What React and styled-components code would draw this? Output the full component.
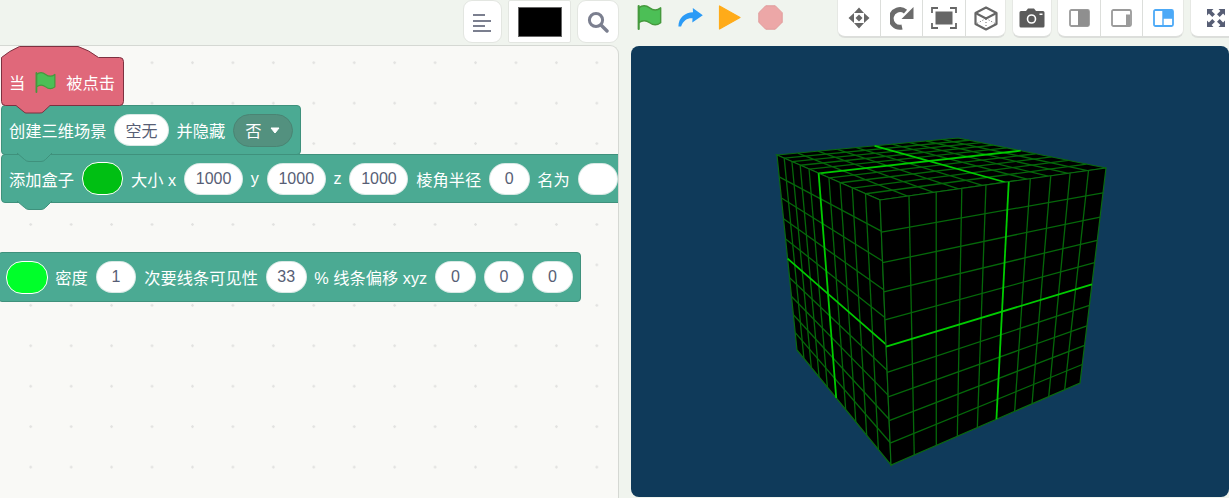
import React from 'react';
import styled, { createGlobalStyle } from 'styled-components';

const GlobalStyle = createGlobalStyle`
    html, body {
        margin: 0;
        padding: 0;
        background: #f0f4ee;
    }
    * {
        box-sizing: border-box;
    }
`;

const Page = styled.div`
    display: grid;
    grid-template-columns: 619px 1fr;
    grid-template-rows: 45px 1fr;
    column-gap: 12px;
    width: 1229px;
    height: 498px;
    overflow: hidden;
    background: #f0f4ee;
    font-family: "Liberation Sans", "Noto Sans CJK SC", sans-serif;
`;

const EditorBar = styled.div`
    display: flex;
    justify-content: flex-end;
    align-items: flex-start;
    gap: 6px;
`;

const StageBar = styled.div`
    display: flex;
    align-items: flex-start;
    justify-content: space-between;
    padding-left: 6px;
`;

const RunControls = styled.div`
    display: flex;
    align-items: center;
    height: 35px;
    gap: 15.5px;
    svg {
        display: block;
    }
`;

const ViewControls = styled.div`
    display: flex;
    align-items: flex-start;
    gap: 5.67px;
    margin-right: -12px;
`;

const SquareButton = styled.div`
    display: flex;
    align-items: center;
    justify-content: center;
    width: ${(p) => p.$w}px;
    height: 43px;
    background: #fff;
    border: 1px solid #e3e6e1;
    border-radius: ${(p) => (p.$flat ? 2 : 9)}px;
`;

const Swatch = styled.div`
    width: 44px;
    height: 30px;
    background: #000;
    border: 1px solid #666;
`;

const Group = styled.div`
    display: flex;
    height: 38px;
    background: #fff;
    border: 1px solid #e6e8e4;
    border-top: 0;
    border-bottom: 2px solid #dcdedb;
    border-radius: 0 0 8px 8px;
`;

const GroupItem = styled.div`
    display: flex;
    align-items: center;
    justify-content: center;
    width: ${(p) => p.$w}px;
    height: 100%;
    & + & {
        border-left: 1px solid #dcdedb;
    }
`;

const Workspace = styled.div`
    position: relative;
    overflow: hidden;
    background-color: #f9f9f6;
    background-image: radial-gradient(circle at center, #e2e2e0 1px, transparent 1.5px);
    background-size: 40.45px 40.45px;
    background-position: 10.5px -3.5px;
    border-top: 1px solid #d5d8d3;
    border-right: 1px solid #d5d8d3;
    border-top-right-radius: 9px;
`;

const Script = styled.div`
    position: absolute;
    left: ${(p) => p.$x}px;
    top: ${(p) => p.$y}px;
`;

const Block = styled.div`
    position: relative;
    z-index: ${(p) => p.$z || 1};
    display: flex;
    align-items: center;
    gap: 7.8px;
    width: max-content;
    height: ${(p) => p.$h || 50}px;
    margin-top: ${(p) => (p.$stacked ? -1 : 0)}px;
    padding: 0 7px;
    color: #fff;
    font-size: 16.25px;
    white-space: nowrap;
    background: #4baa93;
    border: 1px solid #3f917c;
    border-radius: 4px;
`;

const HatBlock = styled.div`
    position: relative;
    z-index: 5;
    display: flex;
    align-items: center;
    gap: 10px;
    width: 124px;
    height: 60px;
    padding: 12px 0 0 8px;
    color: #fff;
    font-size: 16.25px;
    white-space: nowrap;
`;

const HatShape = styled.svg`
    position: absolute;
    left: 0;
    top: 0;
    overflow: visible;
`;

const Label = styled.span`
    position: relative;
`;

const FlagHolder = styled.span`
    position: relative;
    display: flex;
`;

const Tab = styled.svg`
    position: absolute;
    left: 14px;
    top: 100%;
    margin-top: -1px;
    overflow: visible;
`;

const ValueInput = styled.div`
    display: flex;
    align-items: center;
    justify-content: center;
    flex: none;
    width: ${(p) => p.$w}px;
    height: 32px;
    color: #575e75;
    font-size: 16px;
    background: #fff;
    border: 1px solid #3f917c33;
    border-radius: 16px;
`;

const ColorInput = styled.div`
    flex: none;
    width: 41.5px;
    height: 33px;
    background: ${(p) => p.$color};
    border: 1px solid #fff;
    border-radius: 16px;
`;

const Dropdown = styled.div`
    display: flex;
    align-items: center;
    gap: 9px;
    width: 60px;
    height: 33px;
    padding-left: 11px;
    background: #53917f;
    border: 1px solid #4a8473;
    border-radius: 17px;
`;

const Stage = styled.div`
    grid-column: 2;
    height: 451px;
    margin-top: 1px;
    overflow: hidden;
    background: #0f3a5a;
    border-radius: 8px;
    svg {
        display: block;
    }
`;

const Flag = ({ size = 25 }) => (
    <svg width={size} height={size} viewBox="0 0 16.63 17.5">
        <path
            d="M.75 2a6.44 6.44 0 0 1 7.69 0h0a6.44 6.44 0 0 0 7.69 0v10.4a6.44 6.44 0 0 1-7.69 0h0a6.44 6.44 0 0 0-7.69 0"
            fill="#4cbf56"
            stroke="#45993d"
            strokeWidth="1"
            strokeLinejoin="round"
        />
        <path d="M.75 16.75V.75" fill="none" stroke="#45993d" strokeWidth="1.5" strokeLinecap="round" />
    </svg>
);

const RedoArrow = () => (
    <svg width="25" height="25" viewBox="0 0 25 25">
        <path
            d="M0.4 21.5C0.6 12 7.3 7.5 15 7.2L14.8 3L24.8 10.3L14.3 17.5L14.5 13.3C9.2 13 5.3 15.5 3.1 21.5Z"
            fill="#2b9bf6"
            strokeLinejoin="round"
        />
    </svg>
);

const Play = () => (
    <svg width="24" height="25" viewBox="0 0 24 25">
        <path d="M1.5 1V24L22 12.5Z" fill="#ffab19" stroke="#ffab19" strokeWidth="1.2" strokeLinejoin="round" />
    </svg>
);

const Stop = () => (
    <svg width="25" height="25" viewBox="0 0 25 25">
        <path d="M7.7 .8H17.3L24.2 7.7V17.3L17.3 24.2H7.7L.8 17.3V7.7Z" fill="#eca7a7" stroke="#e09c9c" />
    </svg>
);

const AlignIcon = () => (
    <svg width="20" height="20" viewBox="0 0 20 20" fill="#7b7f8f">
        <rect x="0" y="2" width="12" height="2" />
        <rect x="0" y="8" width="18" height="2" />
        <rect x="0" y="13" width="12" height="2" />
        <rect x="0" y="18" width="18" height="2" />
    </svg>
);

const SearchIcon = () => (
    <svg width="22" height="22" viewBox="0 0 22 22" fill="none" stroke="#7b7f8f">
        <circle cx="9" cy="9" r="6.6" strokeWidth="3" />
        <path d="M14 14L20 20" strokeWidth="3.4" strokeLinecap="round" />
    </svg>
);

const MoveIcon = () => (
    <svg width="22" height="22" viewBox="0 0 22 22" fill="#666">
        <path d="M11 .5L16 6H6Z M11 21.5L16 16H6Z M.5 11L6 6V16Z M21.5 11L16 6V16Z" />
        <path d="M11 7.5L14.5 11L11 14.5L7.5 11Z" />
    </svg>
);

const RotateIcon = () => (
    <svg width="24" height="24" viewBox="0 0 24 24">
        <path d="M15.5 5.6A8.8 8.8 0 1 0 12 21" fill="none" stroke="#6b6b6b" strokeWidth="5" />
        <path d="M23.5 1V13H11.5Z" fill="#6b6b6b" />
    </svg>
);

const FitIcon = () => (
    <svg width="26" height="22" viewBox="0 0 26 22">
        <rect x="4.5" y="4.5" width="17" height="13" fill="#666" />
        <path d="M1 6V1H7M19 1H25V6M25 16V21H19M7 21H1V16" fill="none" stroke="#666" strokeWidth="1.8" />
    </svg>
);

const CubeIcon = () => (
    <svg width="24" height="25" viewBox="0 0 24 25" fill="none" stroke="#666">
        <path d="M12 1.5L22.5 7V18L12 23.5L1.5 18V7Z" strokeWidth="2.2" strokeLinejoin="round" />
        <path d="M1.5 7L12 12.5L22.5 7" strokeWidth="2" />
        <path d="M12 13V23M12 12.5L2 18M12 12.5L22 18" strokeWidth="1" strokeDasharray="1 2" />
    </svg>
);

const CameraIcon = () => (
    <svg width="26" height="20" viewBox="0 0 26 20">
        <path
            d="M2 3H7L9 .5H15L17 3H24A1.5 1.5 0 0 1 25.5 4.5V18A1.5 1.5 0 0 1 24 19.5H2A1.5 1.5 0 0 1 .5 18V4.5A1.5 1.5 0 0 1 2 3Z"
            fill="#5b5b5b"
        />
        <circle cx="12.5" cy="11" r="4" fill="#5b5b5b" stroke="#fff" strokeWidth="1.6" />
        <rect x="20.5" y="5.5" width="3" height="1.5" fill="#fff" />
    </svg>
);

const LayoutIcon = ({ kind }) => {
    const blue = kind === 'corner';
    const stroke = blue ? '#4ca9f7' : '#9a9a9a';
    return (
        <svg width="21" height="18" viewBox="0 0 21 18">
            <rect x="1" y="1" width="19" height="16" rx="1.5" fill="#fff" stroke={stroke} strokeWidth="1.8" />
            {kind === 'half' && <path d="M9 1H18.5A1.5 1.5 0 0 1 20 2.5V15.5A1.5 1.5 0 0 1 18.5 17H9Z" fill="#8f8f8f" />}
            {kind === 'side' && <rect x="15" y="5.5" width="4" height="11" fill="#9a9a9a" />}
            {blue && (
                <>
                    <path d="M10 1H18.5A1.5 1.5 0 0 1 20 2.5V9H10Z" fill={stroke} />
                    <path d="M10 1V17M10 9H20" stroke={stroke} strokeWidth="1.4" fill="none" />
                </>
            )}
        </svg>
    );
};

const FullIcon = () => (
    <svg width="20" height="20" viewBox="0 0 20 20" fill="#575e75">
        <path d="M1 1H7.5L5.6 2.9L9 6.3L6.3 9L2.9 5.6L1 7.5Z" />
        <path d="M19 1H12.5L14.4 2.9L11 6.3L13.7 9L17.1 5.6L19 7.5Z" />
        <path d="M1 19H7.5L5.6 17.1L9 13.7L6.3 11L2.9 14.4L1 12.5Z" />
        <path d="M19 19H12.5L14.4 17.1L11 13.7L13.7 11L17.1 14.4L19 12.5Z" />
    </svg>
);

// projective mapping of the unit square onto a face, so grid lines bunch up like the 3d view
const faceMap = ([a, b, c, d]) => {
    const dx1 = b[0] - c[0];
    const dx2 = d[0] - c[0];
    const dy1 = b[1] - c[1];
    const dy2 = d[1] - c[1];
    const sx = a[0] - b[0] + c[0] - d[0];
    const sy = a[1] - b[1] + c[1] - d[1];
    const den = dx1 * dy2 - dx2 * dy1;
    const g = (sx * dy2 - dx2 * sy) / den;
    const h = (dx1 * sy - sx * dy1) / den;
    const m00 = b[0] - a[0] + g * b[0];
    const m01 = d[0] - a[0] + h * d[0];
    const m10 = b[1] - a[1] + g * b[1];
    const m11 = d[1] - a[1] + h * d[1];
    return (u, v) => {
        const w = g * u + h * v + 1;
        return [(m00 * u + m01 * v + a[0]) / w, (m10 * u + m11 * v + a[1]) / w];
    };
};

const A = [777, 155];
const B = [958, 138];
const C = [1106, 168];
const D = [880, 200];
const E = [891, 465];
const F = [797, 350];
const G = [1080, 383];

const FACES = [
    [A, B, C, D],
    [A, D, E, F],
    [D, C, G, E],
];

const pts = (q) => q.map((p) => p.map((n) => n.toFixed(1)).join(',')).join(' ');

const Face = ({ quad }) => {
    const at = faceMap(quad);
    const lines = [];
    for (let i = 1; i < 10; i++) {
        const t = i / 10;
        if (i === 5) continue;
        lines.push([at(t, 0), at(t, 1)], [at(0, t), at(1, t)]);
    }
    return (
        <g>
            <polygon points={pts(quad)} fill="#000" stroke="#0a6a10" strokeWidth="1.2" />
            {lines.map(([p, q], i) => (
                <line key={i} x1={p[0]} y1={p[1]} x2={q[0]} y2={q[1]} stroke="#05680a" strokeWidth="1.3" />
            ))}
            <line x1={at(0.5, 0)[0]} y1={at(0.5, 0)[1]} x2={at(0.5, 1)[0]} y2={at(0.5, 1)[1]} stroke="#00cc00" strokeWidth="1.8" />
            <line x1={at(0, 0.5)[0]} y1={at(0, 0.5)[1]} x2={at(1, 0.5)[0]} y2={at(1, 0.5)[1]} stroke="#00cc00" strokeWidth="1.8" />
        </g>
    );
};

const Cube = () => (
    <svg width="598" height="451" viewBox="631 46 598 451">
        {FACES.map((quad, i) => (
            <Face key={i} quad={quad} />
        ))}
    </svg>
);

const BlockTab = ({ fill, stroke }) => (
    <Tab width="36" height="10" viewBox="0 0 36 10">
        <path d="M1 0L8.5 6.5Q10.5 8.5 13 8.5H25Q27.5 8.5 29.5 6.5L36 0Z" fill={fill} />
        <path d="M1 0L8.5 6.5Q10.5 8.5 13 8.5H25Q27.5 8.5 29.5 6.5L36 0" fill="none" stroke={stroke} />
    </Tab>
);

const Hat = () => (
    <HatBlock>
        <HatShape width="124" height="69" viewBox="0 0 124 69">
            <path
                d="M.5 11.5Q8 5 18.5 .5H77Q88 4 97.5 11.5H118.5Q122.5 11.5 122.5 15.5V55.5Q122.5 59.5 118.5 59.5H49L42 66Q41 67 39 67H25Q24 67 23 66L15 59.5H4.5Q.5 59.5 .5 55.5Z"
                fill="#e0687a"
                stroke="#7d3140"
                strokeWidth="1"
            />
        </HatShape>
        <Label>当</Label>
        <FlagHolder>
            <Flag size={21} />
        </FlagHolder>
        <Label>被点击</Label>
    </HatBlock>
);

export default function App() {
    return (
        <Page>
            <GlobalStyle />
            <EditorBar>
                <SquareButton $w={39}>
                    <AlignIcon />
                </SquareButton>
                <SquareButton $w={63} $flat>
                    <Swatch />
                </SquareButton>
                <SquareButton $w={42}>
                    <SearchIcon />
                </SquareButton>
            </EditorBar>
            <StageBar>
                <RunControls>
                    <Flag />
                    <RedoArrow />
                    <Play />
                    <Stop />
                </RunControls>
                <ViewControls>
                    <Group>
                        <GroupItem $w={42}><MoveIcon /></GroupItem>
                        <GroupItem $w={42}><RotateIcon /></GroupItem>
                        <GroupItem $w={43}><FitIcon /></GroupItem>
                        <GroupItem $w={40}><CubeIcon /></GroupItem>
                    </Group>
                    <Group>
                        <GroupItem $w={38}><CameraIcon /></GroupItem>
                    </Group>
                    <Group>
                        <GroupItem $w={42}><LayoutIcon kind="half" /></GroupItem>
                        <GroupItem $w={42}><LayoutIcon kind="side" /></GroupItem>
                        <GroupItem $w={41}><LayoutIcon kind="corner" /></GroupItem>
                    </Group>
                    <Group>
                        <GroupItem $w={49}><FullIcon /></GroupItem>
                    </Group>
                </ViewControls>
            </StageBar>
            <Workspace>
                <Script $x={1} $y={0}>
                    <Hat />
                    <Block $z={4} $stacked>
                        创建三维场景
                        <ValueInput $w={54.5}>空无</ValueInput>
                        并隐藏
                        <Dropdown>
                            否
                            <svg width="10" height="7" viewBox="0 0 10 7">
                                <path d="M1 1H9L5 6Z" fill="#fff" stroke="#fff" strokeLinejoin="round" />
                            </svg>
                        </Dropdown>
                        <BlockTab fill="#4baa93" stroke="#3f917c" />
                    </Block>
                    <Block $z={3} $h={49} $stacked>
                        添加盒子
                        <ColorInput $color="#00bf13" />
                        大小 x
                        <ValueInput $w={59}>1000</ValueInput>
                        y
                        <ValueInput $w={59}>1000</ValueInput>
                        z
                        <ValueInput $w={59}>1000</ValueInput>
                        棱角半径
                        <ValueInput $w={40.5}>0</ValueInput>
                        名为
                        <ValueInput $w={40.5} />
                        <BlockTab fill="#4baa93" stroke="#3f917c" />
                    </Block>
                </Script>
                <Script $x={-2} $y={206}>
                    <Block>
                        <ColorInput $color="#00ff2a" />
                        密度
                        <ValueInput $w={40.8}>1</ValueInput>
                        次要线条可见性
                        <ValueInput $w={40.8}>33</ValueInput>
                        % 线条偏移 xyz
                        <ValueInput $w={40.8}>0</ValueInput>
                        <ValueInput $w={40.8}>0</ValueInput>
                        <ValueInput $w={40.8}>0</ValueInput>
                    </Block>
                </Script>
            </Workspace>
            <Stage>
                <Cube />
            </Stage>
        </Page>
    );
}
